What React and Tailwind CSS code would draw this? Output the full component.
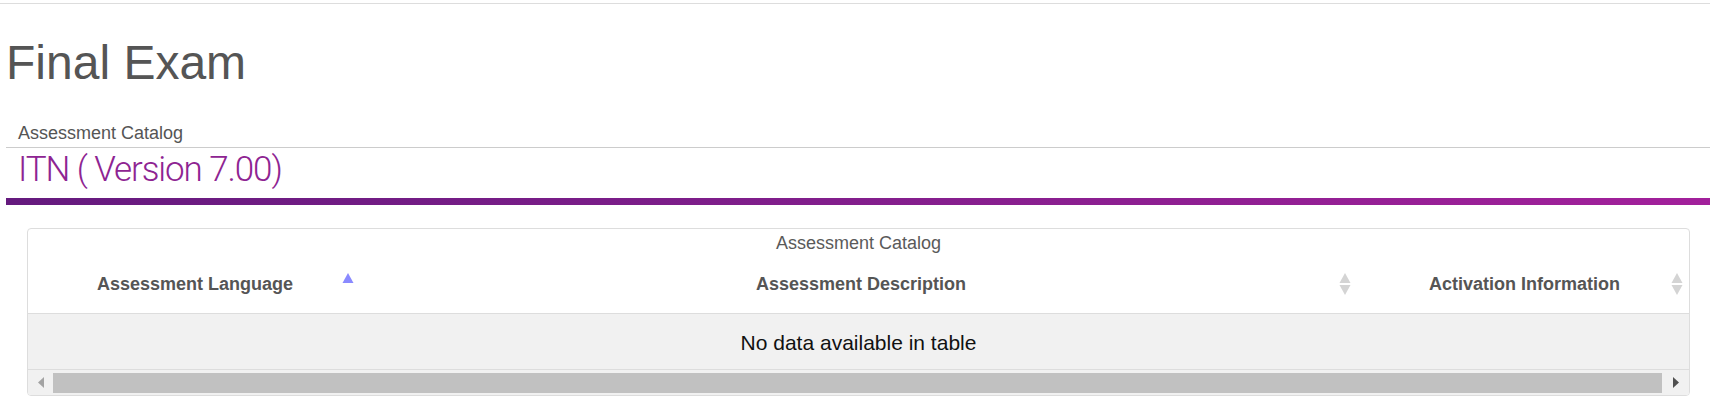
import React from 'react';

function SortIcon({ state }) {
  const up = state === 'asc' ? '#8a8aff' : '#d4d4d4';
  const down = state === 'asc' ? 'transparent' : '#d4d4d4';
  return (
    <svg width="12" height="24" viewBox="0 0 12 24" className="block">
      <polygon points="6,1 11.5,11 0.5,11" fill={up} />
      <polygon points="0.5,13 11.5,13 6,23" fill={down} />
    </svg>
  );
}

const columns = [
  { label: 'Assessment Language', sort: 'asc', icon: 'right-[8px]' },
  { label: 'Assessment Description', sort: 'both', icon: 'right-[9px]' },
  { label: 'Activation Information', sort: 'both', icon: 'right-[6px]' },
];

export default function App() {
  return (
    <div className="w-[1710px] bg-white font-['Liberation_Sans',Arial,sans-serif] text-[#555]">
      <div className="h-[3px]" />
      <div className="border-t border-[#dddddd]" />

      <div className="ml-[6px]">
        <h1 className="mt-[35px] text-[48px] leading-[48px] font-normal text-[#555]">Final Exam</h1>

        <div className="mt-[36px] border-b border-[#cccccc] pb-[4px] pl-[12px] text-[18px] leading-[20px] text-[#555]">
          Assessment Catalog
        </div>

        <div className="mt-[2px] pl-[12px] font-['Roboto','Liberation_Sans',sans-serif] text-[35px] leading-[40px] font-light tracking-[-1.1px] text-[#8e2492]">
          ITN ( Version 7.00)
        </div>

        <div className="mt-[8px] h-[7px] bg-gradient-to-r from-[#651a7e] to-[#a2209b]" />

        <div className="mt-[23px] ml-[21px] mr-[20px] rounded-[4px] border border-[#dddddd] overflow-hidden">
          <div className="h-[23px] pt-[4px] text-center text-[18px] leading-[20px] text-[#5a5a5a]">
            Assessment Catalog
          </div>

          <div className="grid h-[62px] grid-cols-[334px_998px_1fr] border-b border-[#dddddd]">
            {columns.map((col) => (
              <div key={col.label} className="relative flex items-center justify-center pt-[3px]">
                <span className="text-[18px] leading-[20px] font-bold text-[#555]">{col.label}</span>
                <span className={`absolute top-[20px] ${col.icon}`}>
                  <SortIcon state={col.sort} />
                </span>
              </div>
            ))}
          </div>

          <div className="flex h-[56px] items-center justify-center border-b border-[#dddddd] bg-[#f1f1f1] pt-[3px]">
            <span className="text-[21px] leading-[24px] text-[#111]">No data available in table</span>
          </div>

          <div className="flex h-[25px] bg-[#f1f1f1]">
            <div className="flex w-[25px] items-center justify-center">
              <svg width="6" height="11" viewBox="0 0 6 11">
                <polygon points="6,0 6,11 0,5.5" fill="#a3a3a3" />
              </svg>
            </div>
            <div className="mt-[3px] mb-[2px] flex-1 bg-[#c1c1c1]" />
            <div className="flex w-[27px] items-center justify-center">
              <svg width="6" height="11" viewBox="0 0 6 11">
                <polygon points="0,0 6,5.5 0,11" fill="#505050" />
              </svg>
            </div>
          </div>
        </div>
      </div>
    </div>
  );
}
